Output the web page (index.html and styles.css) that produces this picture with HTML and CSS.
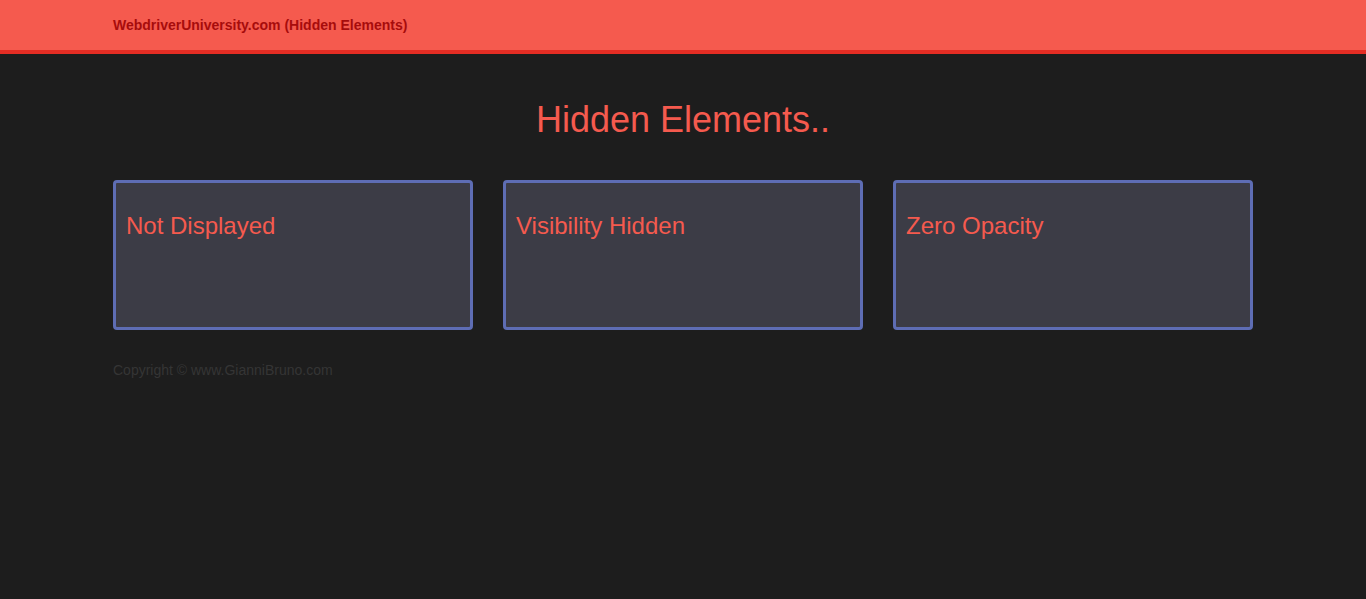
FILE: index.html
```html
<!DOCTYPE html>
<html lang="en">
<head>
    <meta charset="UTF-8">
    <meta name="viewport" content="width=device-width, initial-scale=1.0">
    <title>Hidden Elements</title>
    <link rel="stylesheet" href="styles.css">
</head>
<body>
    <nav class="navbar">
        <div class="container">
            <a class="brand" href="#">WebdriverUniversity.com (Hidden Elements)</a>
        </div>
    </nav>

    <div class="container">
        <h1 class="title">Hidden Elements..</h1>
        <div class="cards">
            <div class="card"><h2>Not Displayed</h2></div>
            <div class="card"><h2>Visibility Hidden</h2></div>
            <div class="card"><h2>Zero Opacity</h2></div>
        </div>
        <p class="copyright">Copyright © www.GianniBruno.com</p>
    </div>
</body>
</html>
```

FILE: styles.css
```css
body {
    font-family: "Liberation Sans", Arial, sans-serif;
    margin: 0;
    background-color: #1d1d1d;
}
.container {
    width: 1140px;
    margin: 0 auto;
}
.navbar {
    height: 50px;
    background-color: #f55a4e;
    border-bottom: 4px solid #e52d24;
    display: flex;
    align-items: center;
}
.brand {
    font-size: 14px;
    font-weight: bold;
    color: #a70c0c;
    text-decoration: none;
}
.title {
    margin: 46px 0 0;
    text-align: center;
    font-size: 36px;
    font-weight: normal;
    line-height: 40px;
    color: #f55a4e;
}
.cards {
    display: flex;
    gap: 30px;
    margin-top: 40px;
}
.card {
    flex: 1;
    height: 144px;
    background-color: #3c3c46;
    border: 3px solid #5e6db4;
    border-radius: 4px;
    padding: 0 10px;
}
.card h2 {
    margin: 29px 0 0;
    font-size: 24px;
    font-weight: normal;
    line-height: 28px;
    color: #f55a4e;
}
.copyright {
    margin: 30px 0 0;
    font-size: 14px;
    line-height: 20px;
    color: #353535;
}
```
